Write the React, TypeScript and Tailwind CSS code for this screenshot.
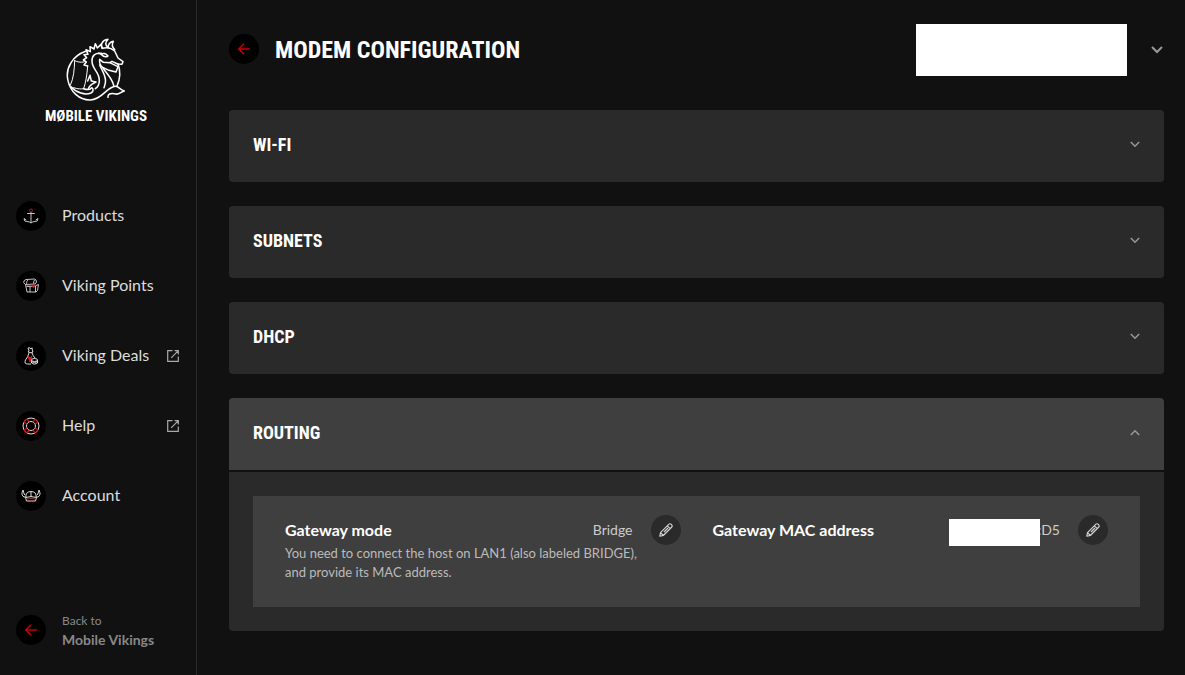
import type { ReactNode } from "react";

const heading = "font-['Roboto_Condensed','Roboto',sans-serif] font-bold uppercase text-white";

function Logo() {
  return (
    <svg viewBox="93 22 180 192" className="h-16 w-15" fill="none" stroke="#fff" strokeWidth="4.6" strokeLinejoin="round" strokeLinecap="round" aria-hidden="true">
      <path d="M152 62C112 76 92 112 98 145C104 183 134 209 166 208C203 206 211 172 240 167C252 166 252 176 268 181C254 184 252 195 238 189C226 187 218 190 219 200" />
      <path d="M119 90C126 94 138 96 147 94M119 90C118 118 116 142 106 164M158 106C156 132 153 153 146 174M116 171C128 175 138 176 146 174" strokeWidth="3" />
      <path d="M146 174C156 178 166 176 170 171C176 174 176 182 168 187C150 194 125 187 108 168" />
      <path d="M158 151L165 134L169 151L183 154L170 161C166 164 162 169 160 174" />
      <path d="M158 106L147 103L154 94L145 88L155 81L147 72L159 71L153 57L166 63L165 48L177 55L181 39L187 52L198 41L202 53" />
      <path d="M202 53C195 42 201 29 219 26C210 36 210 44 219 50M219 50C220 42 226 34 235 32C229 42 233 51 239 57" />
      <path d="M202 53C217 49 231 53 239 61L249 82L264 93L261 101L248 100L231 92L224 96L249 108L243 124L222 119L203 110C193 103 193 94 194 86L205 95L224 96" />
      <path d="M198 71C204 66 213 68 219 76C212 80 205 79 198 71ZM198 71L191 67M199 68C181 65 170 75 171 92C172 117 194 124 193 150C193 161 189 168 181 174" />
      <path d="M194 103C203 122 209 130 211 145C213 154 210 163 207 171M249 99C256 118 256 143 246 166M203 110C210 124 231 141 236 164" />
    </svg>
  );
}

function ArrowLeft() {
  return (
    <svg viewBox="0 0 12 12" className="size-3" fill="none" stroke="#c80000" strokeWidth="1.5" aria-hidden="true">
      <path d="M12 6H1M6 .7L.8 6L6 11.3" />
    </svg>
  );
}

function Chevron({ up = false, large = false }: { up?: boolean; large?: boolean }) {
  return (
    <svg viewBox="0 0 12 8" className={large ? "h-2 w-3" : "h-[7px] w-2.5"} fill="none" stroke="#999" strokeWidth={large ? 2 : 1.8} aria-hidden="true">
      <path d={up ? "M1 7L6 2L11 7" : "M1 1L6 6L11 1"} />
    </svg>
  );
}

function External() {
  return (
    <svg viewBox="0 0 12 12" className="size-3" fill="none" stroke="#aaa" strokeWidth="1.2" aria-hidden="true">
      <path d="M5.5 .7H.7V11.3H11.3V6.5M7.5 .7H11.3V4.5M11.3 .7L4.2 7.8" />
    </svg>
  );
}

function Pencil() {
  return (
    <svg viewBox="0 0 14 14" className="size-3.5" fill="none" stroke="#d8d8d8" strokeWidth="1.1" strokeLinejoin="round" aria-hidden="true">
      <path d="M.8 13.2L1.5 9.7L10 1.2Q11 .3 12 1.2L12.8 2Q13.7 3 12.8 4L4.3 12.5ZM1.5 9.7L4.3 12.5M8.4 2.8L11.2 5.6" />
      <path d="M5 9L9 5" />
    </svg>
  );
}

const anchor = (
  <svg viewBox="0 0 16 16" className="size-4" fill="none" stroke="#ddd" strokeWidth=".9" aria-hidden="true">
    <path d="M8 4V15M4.2 5.5H11.8M1 10.5L1.8 13L4 13.5Q6.5 13.5 8 15Q9.5 13.5 12 13.5L14.2 13L15 10.5M1 10.5L3.2 12M15 10.5L12.8 12" />
    <circle cx="8" cy="2.5" r="1.5" stroke="#c91822" />
  </svg>
);

const chest = (
  <svg viewBox="0 0 16 16" className="size-4" fill="none" stroke="#ddd" strokeWidth=".9" strokeLinejoin="round" aria-hidden="true">
    <path d="M.7 4.8Q.5 2 3 1.5L11.5 1Q13.5 1.5 13.5 4L12 6L2.5 6.5ZM3.5 5.8Q3.5 3 5 2M10.5 5.5Q10.5 2.5 12 1.5M2.5 6.5L4 14L13 14L14.5 12.5L15.5 6.5L12 8L3.5 8.5M7 8.5V14M12.5 8V14" />
    <path d="M3.5 7.5L13.5 7M9.5 8L10.5 10L12 8" stroke="#c91822" />
  </svg>
);

const bag = (
  <svg viewBox="0 0 14 18" className="h-[18px] w-3.5" fill="none" stroke="#ddd" strokeWidth="1" strokeLinejoin="round" aria-hidden="true">
    <path d="M4 1L5.5 .8L7 2L8 .8L8.5 4L9 5L7 5.8L4 5L5 3.8ZM5 6Q4 10 1.5 13Q-.2 17 3.5 17H7M8 5.8Q9 9 11 11" />
    <path d="M4.2 9L6 14.5L7.8 9M4 11H8M6 10V15" stroke="#d71920" strokeWidth="1.3" />
    <ellipse cx="10.5" cy="13" rx="3" ry="1.5" />
    <path d="M7.5 13V16Q10.5 18.4 13.5 16V13M7.5 14.5Q10.5 16.8 13.5 14.5" />
  </svg>
);

const buoy = (
  <svg viewBox="0 0 18 18" className="size-[18px]" fill="none" stroke="#ddd" strokeWidth="1" aria-hidden="true">
    <circle cx="9" cy="9" r="8" />
    <circle cx="9" cy="9" r="4.5" />
    <path d="M2 5.2L5.3 7M5.2 2L7 5.3M12.8 2L11 5.3M16 5.2L12.7 7M2 12.8L5.3 11M5.2 16L7 12.7M12.8 16L11 12.7M16 12.8L12.7 11M2 5.2Q3 3 5.2 2M12.8 2Q15 3 16 5.2M2 12.8Q3 15 5.2 16M12.8 16Q15 15 16 12.8" stroke="#d71920" strokeWidth="1.3" />
  </svg>
);

const helmet = (
  <svg viewBox="0 0 20 14" className="h-3.5 w-5" fill="none" stroke="#ddd" strokeWidth="1" strokeLinejoin="round" aria-hidden="true">
    <path d="M2 1Q-.5 6 3 8L5 8M3.8 6L2.8 4L2 1M18 1Q20.5 6 17 8L15 8M16.2 6L17.2 4L18 1M5 8.5Q4 2.8 10 2.5Q16 2.8 15 8.5M10 2.5V8M4.5 8.5L10 7.6L15.5 8.5L14.5 12H5.5Z" />
    <path d="M6 10L10 9.5L14 10M6 12H14" stroke="#b94950" strokeWidth=".8" />
  </svg>
);

const nav: { label: string; icon: ReactNode; external?: boolean }[] = [
  { label: "Products", icon: anchor },
  { label: "Viking Points", icon: chest },
  { label: "Viking Deals", icon: bag, external: true },
  { label: "Help", icon: buoy, external: true },
  { label: "Account", icon: helmet },
];

const round = "flex size-[30px] shrink-0 items-center justify-center rounded-full";

function Collapsed({ title }: { title: string }) {
  return (
    <section className="rounded bg-[#2a2a2a]">
      <h2>
        <button type="button" aria-expanded="false" className="flex h-18 w-full items-center justify-between px-6 pb-[3px]">
          <span className={`${heading} text-lg`}>{title}</span>
          <Chevron />
        </button>
      </h2>
    </section>
  );
}

function Setting({ title, value, note }: { title: string; value: ReactNode; note?: string }) {
  return (
    <div className="flex items-start">
      <div className="min-w-0 grow">
        <div className="flex h-[30px] items-center justify-between">
          <h3 className="text-base font-bold text-white">{title}</h3>
          <span className="text-sm text-[#ccc]">{value}</span>
        </div>
        {note && <p className="-mt-px -mr-2 text-[13px] leading-[19px] text-[#bbb]">{note}</p>}
      </div>
      <button type="button" aria-label={`Edit ${title}`} className={`${round} ml-[18px] bg-[#2a2a2a]`}>
        <Pencil />
      </button>
    </div>
  );
}

export default function App() {
  return (
    <div className="flex min-h-screen bg-[#111] font-['Lato',sans-serif] text-[#ddd]">
      <aside className="flex w-[197px] shrink-0 flex-col border-r border-[#2a2a2a] pb-[25px]">
        <a href="#home" className="flex flex-col items-center pt-[38px] pr-1">
          <Logo />
          <span className="mt-0.5 font-['Roboto_Condensed','Roboto',sans-serif] text-[15px] leading-6 font-bold text-white">MØBILE VIKINGS</span>
        </a>
        <nav className="mt-[73px] flex flex-col gap-10 px-4">
          {nav.map((item) => (
            <a key={item.label} href="#nav" className="flex h-[30px] items-center">
              <span className={`${round} bg-black`}>{item.icon}</span>
              <span className="ml-4 grow pb-0.5 text-base">{item.label}</span>
              {item.external && <span className="pr-px"><External /></span>}
            </a>
          ))}
        </nav>
        <a href="#back" className="mt-auto flex items-start px-4 text-[#888]">
          <span className={`${round} mt-1 bg-black`}><ArrowLeft /></span>
          <span className="ml-4 flex flex-col pb-px">
            <span className="text-xs leading-[19px]">Back to</span>
            <span className="text-sm leading-[19px] font-bold">Mobile Vikings</span>
          </span>
        </a>
      </aside>

      <main className="min-w-0 grow pt-6 pr-[21px] pb-11 pl-8">
        <header className="flex h-13 items-center">
          <button type="button" aria-label="Back" className={`${round} mb-0.5 bg-black`}><ArrowLeft /></button>
          <h1 className={`${heading} ml-4 text-2xl`}>Modem configuration</h1>
          <button type="button" aria-label="Choose account" className="mr-px ml-auto flex items-center gap-6">
            <span className="h-13 w-[211px] bg-white" />
            <Chevron large />
          </button>
        </header>

        <div className="mt-[34px] flex flex-col gap-6">
          <Collapsed title="Wi-Fi" />
          <Collapsed title="Subnets" />
          <Collapsed title="DHCP" />
          <section className="overflow-hidden rounded">
            <h2>
              <button type="button" aria-expanded="true" className="flex h-18 w-full items-center justify-between bg-[#3f3f3f] px-6 pb-[3px]">
                <span className={`${heading} text-lg`}>Routing</span>
                <Chevron up />
              </button>
            </h2>
            <div className="mt-0.5 bg-[#2a2a2a] p-6">
              <div className="grid grid-cols-2 gap-8 bg-[#3f3f3f] px-8 pt-[19px] pb-[25px]">
                <Setting title="Gateway mode" value="Bridge" note="You need to connect the host on LAN1 (also labeled BRIDGE), and provide its MAC address." />
                <Setting
                  title="Gateway MAC address"
                  value={
                    <span className="relative">
                      :D5
                      <span className="absolute -top-0.5 right-5 h-[27px] w-[91px] bg-white" />
                    </span>
                  }
                />
              </div>
            </div>
          </section>
        </div>
      </main>
    </div>
  );
}
